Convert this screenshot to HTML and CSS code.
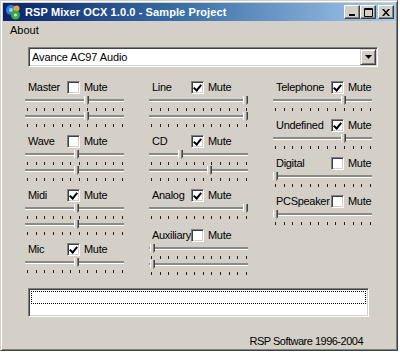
FILE: index.html
```html
<!DOCTYPE html>
<html lang="en">
<head>
    <meta charset="UTF-8">
    <meta name="viewport" content="width=device-width, initial-scale=1.0">
    <title>RSP Mixer OCX 1.0.0 - Sample Project</title>
    <link rel="stylesheet" href="styles.css">
</head>
<body>
    <div class="window">
        <div class="titlebar">
            <svg class="app-icon" width="16" height="16" viewBox="0 0 16 16">
                <circle cx="6" cy="6" r="5" fill="#2f7fd8"/>
                <circle cx="6" cy="6" r="2" fill="#9fd0ff"/>
                <circle cx="11.5" cy="4.5" r="3" fill="#f0a22a"/>
                <circle cx="10.5" cy="11" r="4.5" fill="#3aa845"/>
                <circle cx="10.5" cy="11" r="1.6" fill="#b8f0a0"/>
            </svg>
            <span class="title">RSP Mixer OCX 1.0.0 - Sample Project</span>
            <div class="caption-buttons">
                <button class="cap-btn">
                    <svg width="8" height="7" viewBox="0 0 8 7"><rect x="1" y="5" width="6" height="2" fill="#000"/></svg>
                </button>
                <button class="cap-btn">
                    <svg width="9" height="9" viewBox="0 0 9 9"><path d="M0.5 0.5h8v8h-8z M0.5 1.5h8" fill="none" stroke="#000"/></svg>
                </button>
                <button class="cap-btn close">
                    <svg width="8" height="7" viewBox="0 0 8 7"><path d="M0 0h2l2 2.5L6 0h2L5 3.5 8 7H6L4 4.5 2 7H0l3-3.5z" fill="#000"/></svg>
                </button>
            </div>
        </div>

        <div class="menubar"><span>About</span></div>

        <div class="client">
            <div class="combo">
                <span class="combo-text">Avance AC97 Audio</span>
                <span class="combo-btn">
                    <svg width="7" height="4" viewBox="0 0 7 4"><path d="M0 0h7L3.5 4z" fill="#000"/></svg>
                </span>
            </div>

            <div class="mixer">
                <div class="col">
                    <div class="group">
                        <div class="head"><span class="name">Master</span><span class="check"></span><span class="mute">Mute</span></div>
                        <div class="slider"><div class="groove"></div><div class="ticks"></div><span class="thumb" style="left:59px"></span></div>
                        <div class="slider"><div class="groove"></div><div class="ticks"></div><span class="thumb" style="left:59px"></span></div>
                    </div>
                    <div class="group">
                        <div class="head"><span class="name">Wave</span><span class="check"></span><span class="mute">Mute</span></div>
                        <div class="slider"><div class="groove"></div><div class="ticks"></div><span class="thumb" style="left:49px"></span></div>
                        <div class="slider"><div class="groove"></div><div class="ticks"></div><span class="thumb" style="left:49px"></span></div>
                    </div>
                    <div class="group">
                        <div class="head"><span class="name">Midi</span><span class="check checked"></span><span class="mute">Mute</span></div>
                        <div class="slider"><div class="groove"></div><div class="ticks"></div><span class="thumb" style="left:49px"></span></div>
                        <div class="slider"><div class="groove"></div><div class="ticks"></div><span class="thumb" style="left:49px"></span></div>
                    </div>
                    <div class="group">
                        <div class="head"><span class="name">Mic</span><span class="check checked"></span><span class="mute">Mute</span></div>
                        <div class="slider"><div class="groove"></div><div class="ticks"></div><span class="thumb" style="left:49px"></span></div>
                    </div>
                </div>

                <div class="col">
                    <div class="group">
                        <div class="head"><span class="name">Line</span><span class="check checked"></span><span class="mute">Mute</span></div>
                        <div class="slider"><div class="groove"></div><div class="ticks"></div><span class="thumb" style="left:94px"></span></div>
                        <div class="slider"><div class="groove"></div><div class="ticks"></div><span class="thumb" style="left:94px"></span></div>
                    </div>
                    <div class="group">
                        <div class="head"><span class="name">CD</span><span class="check checked"></span><span class="mute">Mute</span></div>
                        <div class="slider"><div class="groove"></div><div class="ticks"></div><span class="thumb" style="left:29px"></span></div>
                        <div class="slider"><div class="groove"></div><div class="ticks"></div><span class="thumb" style="left:58px"></span></div>
                    </div>
                    <div class="group">
                        <div class="head"><span class="name">Analog</span><span class="check checked"></span><span class="mute">Mute</span></div>
                        <div class="slider"><div class="groove"></div><div class="ticks"></div><span class="thumb" style="left:94px"></span></div>
                    </div>
                    <div class="group spaced">
                        <div class="head"><span class="name">Auxiliary</span><span class="check"></span><span class="mute">Mute</span></div>
                        <div class="slider"><div class="groove"></div><div class="ticks"></div><span class="thumb" style="left:1px"></span></div>
                        <div class="slider"><div class="groove"></div><div class="ticks"></div><span class="thumb" style="left:1px"></span></div>
                    </div>
                </div>

                <div class="col wide">
                    <div class="group">
                        <div class="head"><span class="name">Telephone</span><span class="check checked"></span><span class="mute">Mute</span></div>
                        <div class="slider"><div class="groove"></div><div class="ticks"></div><span class="thumb" style="left:68px"></span></div>
                    </div>
                    <div class="group">
                        <div class="head"><span class="name">Undefined</span><span class="check checked"></span><span class="mute">Mute</span></div>
                        <div class="slider"><div class="groove"></div><div class="ticks"></div><span class="thumb" style="left:68px"></span></div>
                    </div>
                    <div class="group">
                        <div class="head"><span class="name">Digital</span><span class="check"></span><span class="mute">Mute</span></div>
                        <div class="slider"><div class="groove"></div><div class="ticks"></div><span class="thumb" style="left:0px"></span></div>
                    </div>
                    <div class="group">
                        <div class="head"><span class="name">PCSpeaker</span><span class="check"></span><span class="mute">Mute</span></div>
                        <div class="slider"><div class="groove"></div><div class="ticks"></div><span class="thumb" style="left:0px"></span></div>
                    </div>
                </div>
            </div>

            <div class="listbox"><div class="focus-row"></div></div>

            <div class="footer">RSP Software 1996-2004</div>
        </div>
    </div>
</body>
</html>
```

FILE: styles.css
```css
body {
    margin: 0;
    padding: 0;
    background-color: #fff;
    font-family: "Liberation Sans", Arial, sans-serif;
    font-size: 11px;
    color: #000;
}
.window {
    width: 398px;
    height: 351px;
    box-sizing: border-box;
    padding: 2px 1px 2px 2px;
    border: 1px solid;
    border-color: #d4d0c8 #404040 #404040 #d4d0c8;
    box-shadow: inset 1px 1px #fff, inset -1px -1px #808080;
    background-color: #d4d0c8;
    display: flex;
    flex-direction: column;
}
.titlebar {
    height: 18px;
    display: flex;
    align-items: center;
    padding: 0 2px;
    background: linear-gradient(to right, #0a246a, #3a6ea5 45%, #a6caf0);
}
.app-icon {
    margin-right: 4px;
}
.title {
    color: #fff;
    font-weight: bold;
    letter-spacing: 0.1px;
}
.caption-buttons {
    margin-left: auto;
    display: flex;
}
.cap-btn {
    width: 16px;
    height: 14px;
    padding: 0;
    box-sizing: border-box;
    background-color: #d4d0c8;
    border: 1px solid;
    border-color: #fff #404040 #404040 #fff;
    box-shadow: inset -1px -1px #808080;
    display: flex;
    align-items: center;
    justify-content: center;
}
.cap-btn.close {
    margin-left: 2px;
}
.menubar {
    height: 19px;
    line-height: 19px;
    padding-left: 7px;
}
.client {
    flex: 1;
    padding: 7px 0 0 22px;
    display: flex;
    flex-direction: column;
}

/* sunken controls */
.combo, .check, .listbox {
    box-sizing: border-box;
    background-color: #fff;
    border: 1px solid;
    border-color: #808080 #fff #fff #808080;
    box-shadow: inset 1px 1px #404040, inset -1px -1px #d4d0c8;
}
.combo {
    width: 350px;
    height: 20px;
    margin-left: 3px;
    padding: 1px;
    display: flex;
    align-items: center;
}
.combo-text {
    padding-left: 2px;
    letter-spacing: -0.1px;
}
.combo-btn {
    margin-left: auto;
    width: 16px;
    height: 16px;
    box-sizing: border-box;
    background-color: #d4d0c8;
    border: 1px solid;
    border-color: #d4d0c8 #404040 #404040 #d4d0c8;
    box-shadow: inset 1px 1px #fff, inset -1px -1px #808080;
    display: flex;
    align-items: center;
    justify-content: center;
}

.mixer {
    margin-top: 13px;
    display: grid;
    grid-template-columns: repeat(3, 99px);
    column-gap: 25px;
    align-items: start;
}
.col {
    display: flex;
    flex-direction: column;
    gap: 8px;
}
.group.spaced {
    margin-top: 2px;
}
.head {
    height: 14px;
    padding-left: 3px;
    display: flex;
    align-items: center;
    letter-spacing: -0.3px;
}
.name {
    width: 39px;
    white-space: nowrap;
}
.wide .name {
    width: 55px;
}
.check {
    width: 13px;
    height: 13px;
    flex-shrink: 0;
    position: relative;
}
.check.checked::after {
    content: "";
    position: absolute;
    left: 3px;
    top: 1px;
    width: 3px;
    height: 6px;
    border: solid #000;
    border-width: 0 2px 2px 0;
    transform: rotate(40deg);
}
.mute {
    margin-left: 4px;
}

.slider {
    position: relative;
    height: 16px;
}
.groove {
    position: absolute;
    left: 0;
    right: 0;
    top: 5px;
    height: 0;
    border-top: 2px solid #8c8a85;
    border-bottom: 1px solid #fff;
}
.ticks {
    position: absolute;
    left: 2px;
    width: 96px;
    top: 14px;
    height: 3px;
    background: repeating-linear-gradient(to right, #222 0 1px, transparent 1px 8.636px);
}
.thumb {
    position: absolute;
    top: 2px;
    width: 5px;
    height: 10px;
    background: linear-gradient(to right, #fff 0 1px, #d4d0c8 1px 3px, #808080 3px 4px, #404040 4px);
    clip-path: polygon(0 0, 100% 0, 100% 70%, 50% 100%, 0 70%);
}

.listbox {
    margin-top: 14px;
    margin-left: 3px;
    width: 341px;
    height: 29px;
    padding: 2px;
}
.focus-row {
    height: 13px;
    box-sizing: border-box;
    border: 1px dotted #000;
}
.footer {
    margin-top: 18px;
    width: 338px;
    line-height: 13px;
    text-align: right;
    letter-spacing: -0.5px;
}
```
